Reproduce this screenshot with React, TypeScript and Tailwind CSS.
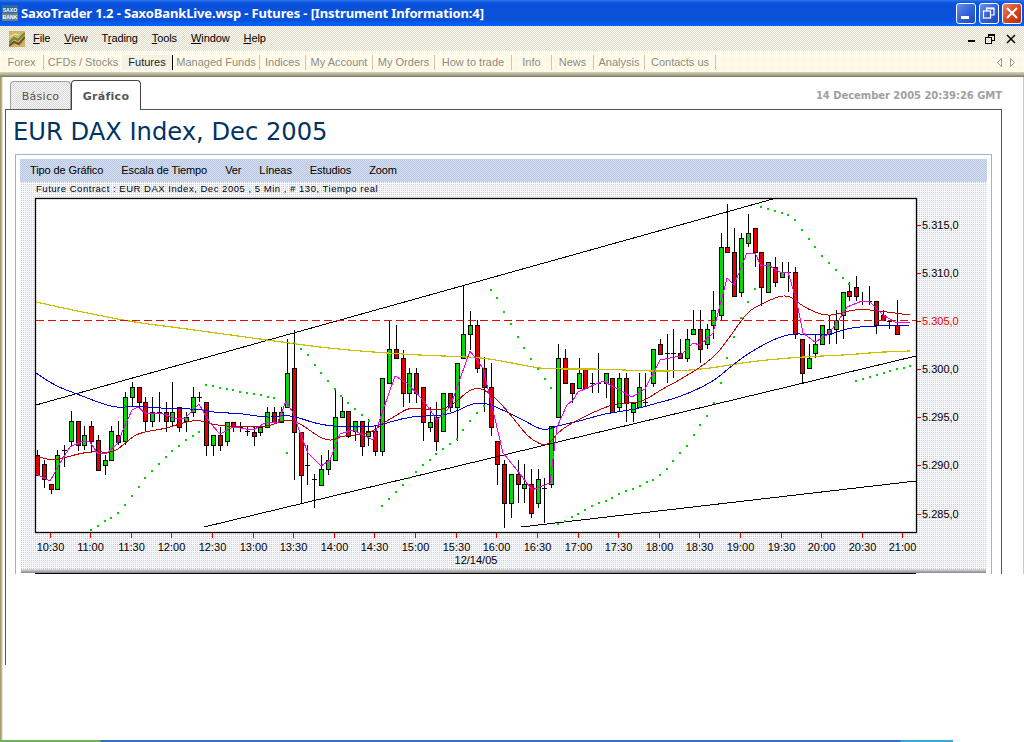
import React from "react";

const menuItems: [string, string, string][] = [
  ["", "F", "ile"],
  ["", "V", "iew"],
  ["T", "r", "ading"],
  ["", "T", "ools"],
  ["", "W", "indow"],
  ["", "H", "elp"],
];

const navItems = [
  { label: "Forex", cls: "w-[44px] border-r border-[#c9c6b8] text-[#8c8c86]" },
  { label: "CFDs / Stocks", cls: "w-[78px] text-[#8c8c86]" },
  { label: "Futures", cls: "w-[50px] bg-[#f4f1e6] text-[#222222]" },
  { label: "Managed Funds", cls: "w-[88px] border-l border-r border-l-black border-r-[#c9c6b8] text-[#8c8c86]" },
  { label: "Indices", cls: "w-[46px] border-r border-[#c9c6b8] text-[#8c8c86]" },
  { label: "My Account", cls: "w-[67px] border-r border-[#c9c6b8] text-[#8c8c86]" },
  { label: "My Orders", cls: "w-[62px] border-r border-[#c9c6b8] text-[#8c8c86]" },
  { label: "How to trade", cls: "w-[77px] border-r border-[#c9c6b8] text-[#8c8c86]" },
  { label: "Info", cls: "w-[40px] border-r border-[#c9c6b8] text-[#8c8c86]" },
  { label: "News", cls: "w-[42px] border-r border-[#c9c6b8] text-[#8c8c86]" },
  { label: "Analysis", cls: "w-[51px] border-r border-[#c9c6b8] text-[#8c8c86]" },
  { label: "Contacts us", cls: "w-[71px] border-r border-[#c9c6b8] text-[#8c8c86]" },
];

const chartMenu = ["Tipo de Gráfico", "Escala de Tiempo", "Ver", "Líneas", "Estudios", "Zoom"];

// x, wick top, body top, body bottom, wick bottom, g/r/d
type Candle = [number, number, number, number, number, string];
const candles: Candle[] = [
  [37, 450, 455, 475, 475, "r"], [44, 460, 464, 479, 488, "r"], [51, 484, 484, 489, 494, "r"], [57, 450, 455, 489, 489, "g"],
  [64, 445, 450, 450, 467, "d"], [71, 411, 421, 441, 447, "g"], [78, 421, 421, 445, 451, "r"], [84, 426, 435, 445, 450, "g"],
  [91, 421, 426, 441, 452, "r"], [98, 435, 440, 470, 470, "r"], [105, 455, 460, 465, 475, "g"], [111, 426, 431, 460, 460, "g"],
  [118, 421, 435, 442, 445, "r"], [125, 392, 397, 441, 445, "g"], [132, 382, 387, 397, 407, "g"], [139, 387, 387, 402, 408, "r"],
  [145, 397, 402, 421, 432, "r"], [152, 397, 412, 421, 427, "g"], [159, 392, 412, 412, 422, "d"], [166, 402, 412, 421, 432, "r"],
  [172, 382, 412, 421, 427, "g"], [179, 407, 407, 427, 432, "r"], [186, 412, 417, 421, 432, "g"], [193, 387, 397, 412, 417, "g"],
  [199, 392, 397, 397, 402, "d"], [206, 402, 402, 445, 456, "r"], [213, 435, 435, 445, 456, "g"], [220, 427, 435, 445, 451, "r"],
  [227, 422, 422, 441, 446, "g"], [233, 422, 422, 427, 432, "r"], [240, 422, 427, 427, 432, "d"], [247, 427, 431, 431, 436, "d"],
  [254, 427, 432, 436, 446, "r"], [260, 427, 427, 432, 436, "g"], [267, 407, 412, 427, 427, "g"], [274, 407, 412, 422, 422, "r"],
  [281, 407, 412, 422, 422, "g"], [287, 339, 373, 407, 407, "g"], [294, 330, 368, 432, 480, "r"], [301, 432, 432, 475, 504, "r"],
  [307, 445, 465, 465, 485, "d"], [314, 474, 479, 479, 508, "d"], [321, 455, 469, 485, 485, "g"], [328, 450, 460, 469, 475, "g"],
  [335, 388, 417, 460, 460, "g"], [342, 397, 411, 417, 417, "g"], [348, 411, 411, 436, 438, "r"], [355, 421, 421, 431, 441, "g"],
  [362, 421, 421, 446, 456, "r"], [368, 419, 431, 436, 446, "g"], [375, 426, 431, 451, 456, "r"], [382, 378, 378, 451, 456, "g"],
  [389, 320, 349, 383, 383, "g"], [396, 325, 349, 358, 358, "r"], [403, 350, 358, 393, 407, "r"], [409, 368, 373, 393, 403, "g"],
  [416, 368, 373, 393, 403, "r"], [423, 387, 387, 422, 441, "r"], [430, 407, 422, 427, 432, "g"], [436, 402, 417, 441, 451, "r"],
  [443, 393, 393, 431, 431, "g"], [450, 393, 393, 407, 412, "r"], [457, 363, 363, 407, 441, "g"], [463, 286, 334, 358, 358, "g"],
  [470, 311, 325, 334, 350, "g"], [477, 320, 325, 368, 373, "r"], [484, 357, 368, 387, 412, "r"], [491, 363, 387, 427, 436, "r"],
  [497, 441, 441, 464, 485, "r"], [504, 460, 464, 503, 528, "r"], [511, 474, 474, 503, 518, "g"], [518, 460, 474, 484, 503, "r"],
  [524, 464, 484, 488, 503, "g"], [531, 469, 484, 513, 518, "r"], [538, 469, 479, 503, 508, "g"], [544, 478, 488, 488, 523, "d"],
  [551, 426, 426, 484, 488, "g"], [558, 344, 358, 417, 417, "g"], [565, 349, 358, 383, 383, "r"], [572, 383, 383, 393, 403, "r"],
  [579, 358, 373, 388, 388, "g"], [585, 368, 368, 388, 388, "r"], [592, 373, 383, 383, 393, "d"], [598, 353, 383, 383, 393, "d"],
  [606, 373, 373, 383, 398, "g"], [612, 378, 378, 412, 412, "r"], [619, 373, 378, 407, 412, "g"], [626, 373, 378, 403, 422, "r"],
  [633, 403, 403, 412, 422, "g"], [639, 373, 387, 407, 407, "g"], [645, 373, 402, 402, 407, "d"], [653, 349, 349, 383, 387, "g"],
  [660, 339, 344, 354, 354, "r"], [667, 334, 353, 353, 383, "d"], [673, 329, 353, 353, 378, "d"], [680, 339, 353, 358, 358, "r"],
  [687, 329, 339, 358, 362, "g"], [693, 310, 329, 334, 334, "g"], [700, 310, 329, 349, 363, "r"], [707, 324, 329, 344, 349, "g"],
  [713, 291, 310, 325, 339, "g"], [721, 233, 247, 315, 320, "g"], [727, 204, 247, 252, 252, "r"], [734, 228, 252, 296, 296, "r"],
  [741, 233, 238, 292, 297, "g"], [748, 214, 233, 243, 247, "g"], [755, 228, 228, 252, 267, "r"], [761, 252, 252, 287, 306, "r"],
  [768, 262, 262, 292, 292, "g"], [775, 257, 267, 282, 287, "r"], [782, 262, 272, 277, 277, "g"], [788, 262, 272, 272, 292, "d"],
  [795, 267, 272, 334, 339, "r"], [802, 339, 339, 373, 383, "r"], [809, 344, 358, 368, 368, "g"], [815, 334, 344, 353, 358, "g"],
  [822, 325, 325, 344, 344, "g"], [829, 315, 329, 334, 344, "g"], [836, 310, 320, 329, 344, "g"], [843, 292, 292, 315, 339, "g"],
  [849, 282, 291, 296, 301, "r"], [856, 276, 287, 296, 301, "r"], [862, 292, 301, 301, 305, "d"], [869, 286, 301, 301, 305, "d"],
  [876, 301, 301, 325, 334, "r"], [883, 310, 315, 320, 320, "r"], [889, 321, 321, 321, 329, "d"], [897, 300, 325, 334, 334, "r"],
];

const yellowLine = "36,302 117,320 180,328 267,340 333,349 413,355 473,357 497,360 537,368 553,369 607,369 640,371 680,371 713,368 747,362 797,357 847,355 880,352 910,351";
const blueLine = "36,373 53,385 77,394 100,403 117,408 133,406 160,408 180,409 200,409 217,413 240,413 267,418 287,415 300,418 317,424 340,427 373,427 390,422 413,416 437,416 453,413 473,403 487,403 507,412 527,422 543,431 557,426 580,421 607,413 633,410 657,403 680,397 713,382 730,367 753,350 787,333 813,335 830,335 847,328 873,326 910,325";
const redLine = "36,456 50,461 67,457 90,451 113,453 123,445 137,433 163,429 173,426 197,419 213,425 240,427 267,427 287,419 300,423 320,438 333,441 340,436 370,434 383,423 397,415 410,407 437,411 453,405 470,389 483,388 500,402 517,423 530,439 547,447 557,433 573,422 607,406 623,403 643,402 660,390 680,380 713,359 730,337 747,312 763,303 787,293 803,307 827,317 847,311 863,309 887,312 910,315";
const magentaLine = "36,474 50,481 63,458 70,447 83,441 90,442 98,454 107,453 117,444 123,430 132,410 138,407 145,413 163,414 177,419 185,418 199,404 210,423 220,434 233,427 253,430 265,423 278,422 286,401 293,413 302,438 308,453 321,466 330,460 340,434 353,430 373,440 382,413 395,376 407,383 423,400 437,420 450,407 470,351 483,368 503,453 517,470 532,490 550,483 557,427 567,405 573,400 578,392 603,381 623,392 632,397 645,389 660,360 680,356 693,343 700,345 713,333 727,278 734,285 747,253 755,253 761,266 768,265 780,272 788,272 797,303 803,333 815,342 827,335 837,323 847,307 862,301 870,302 883,315 897,323 910,322";

// rounds the corners of a point list, the moving averages are not angular
function smoothPath(points: string) {
  const pts = points.split(" ").map((p) => p.split(",").map(Number));
  let d = `M${pts[0][0]} ${pts[0][1]}`;
  for (let i = 1; i < pts.length - 1; i++) {
    const mx = (pts[i][0] + pts[i + 1][0]) / 2;
    const my = (pts[i][1] + pts[i + 1][1]) / 2;
    d += ` Q${pts[i][0]} ${pts[i][1]} ${mx} ${my}`;
  }
  const last = pts[pts.length - 1];
  return `${d} L${last[0]} ${last[1]}`;
}

const sarDots: [number, number][] = [
  [90, 529], [97, 525], [104, 520], [110, 517], [117, 512], [124, 504], [131, 495], [138, 486], [144, 477], [151, 470], [158, 463], [165, 456], [171, 450], [178, 445], [185, 439], [192, 435], [198, 431],
  [205, 384], [212, 385], [219, 387], [226, 388], [232, 389], [239, 391], [246, 392], [253, 393], [260, 394], [267, 396], [273, 397], [286, 452],
  [293, 342], [300, 348], [307, 354], [314, 364], [320, 372], [327, 380], [334, 388], [340, 395], [347, 402], [354, 408], [361, 414], [368, 420],
  [381, 505], [388, 498], [395, 491], [402, 484], [408, 477], [415, 471], [422, 464], [429, 459], [435, 453], [442, 448], [449, 443], [456, 438], [462, 429], [469, 420], [476, 412], [483, 405],
  [490, 289], [496, 297], [503, 311], [510, 323], [517, 336], [523, 347], [530, 358], [537, 368], [544, 378], [550, 387],
  [557, 523], [564, 520], [571, 516], [577, 513], [584, 509], [591, 505], [598, 502], [605, 500], [611, 497], [618, 493], [625, 490], [632, 488], [639, 485], [646, 481], [652, 479], [659, 474], [666, 468], [672, 460], [679, 452], [686, 445], [693, 434], [699, 424], [706, 415], [713, 402], [720, 382], [726, 357], [733, 336], [740, 317], [747, 301], [754, 288],
  [760, 206], [767, 208], [774, 210], [781, 212], [787, 214], [794, 219], [801, 229], [808, 238], [814, 246], [821, 255], [828, 262], [835, 269], [842, 277], [848, 283],
  [855, 380], [862, 378], [869, 376], [876, 374], [883, 372], [889, 370], [896, 368], [903, 367], [909, 365],
];

const xTicks: [number, string][] = [
  [50, "10:30"], [90, "11:00"], [131, "11:30"], [171, "12:00"], [212, "12:30"], [253, "13:00"], [293, "13:30"], [334, "14:00"], [374, "14:30"], [415, "15:00"], [456, "15:30"],
  [496, "16:00"], [537, "16:30"], [578, "17:00"], [618, "17:30"], [659, "18:00"], [699, "18:30"], [740, "19:00"], [781, "19:30"], [821, "20:00"], [862, "20:30"], [902, "21:00"],
];

const yTicks: [number, string][] = [
  [225, "5.315,0"], [273, "5.310,0"], [321, "5.305,0"], [369, "5.300,0"], [417, "5.295,0"], [465, "5.290,0"], [514, "5.285,0"],
];

function Chart() {
  return (
    <svg width={967} height={387} viewBox="20 182 967 387" className="block font-['Liberation_Sans',sans-serif]">
      <text x={36} y={192} className="text-[9.5px] tracking-[0.52px]" fill="#000">
        Future Contract : EUR DAX Index, Dec 2005 , 5 Min , # 130, Tiempo real
      </text>
      <rect x={35.5} y={198.5} width={881} height={334} fill="#fff" stroke="#000" strokeWidth={1.3} />

      {candles.map(([x, wt, bt, bb, wb, c]) => (
        <g key={x} shapeRendering="crispEdges">
          <line x1={x + 0.5} x2={x + 0.5} y1={wt} y2={wb} stroke="#000" />
          {c === "d" ? (
            <line x1={x - 2} x2={x + 3} y1={bt + 0.5} y2={bt + 0.5} stroke="#000" />
          ) : (
            <rect x={x - 1.5} y={bt + 0.5} width={4} height={bb - bt} fill={c === "g" ? "#00dc00" : "#e40000"} stroke="#000" />
          )}
        </g>
      ))}

      <g fill="none" shapeRendering="crispEdges">
        <polyline points="36,405 773,199" stroke="#000" strokeWidth={1} />
        <polyline points="204,527 916,356" stroke="#000" strokeWidth={1} />
        <polyline points="521,527 916,481" stroke="#000" strokeWidth={1} />
        <path d={smoothPath(yellowLine)} stroke="#c8c000" strokeWidth={1.2} />
        <path d={smoothPath(blueLine)} stroke="#0000d0" strokeWidth={1} />
        <path d={smoothPath(redLine)} stroke="#c00000" strokeWidth={1} />
        <polyline points={magentaLine} stroke="#f000f0" strokeWidth={1} />
      </g>
      <line x1={36} x2={916} y1={320.5} y2={320.5} stroke="#f00000" strokeDasharray="8 4" shapeRendering="crispEdges" />

      {sarDots.map(([x, y]) => (
        <rect key={`${x}-${y}`} x={x} y={y} width={2} height={2} fill="#00d000" />
      ))}

      {xTicks.map(([x, t]) => (
        <g key={t}>
          <line x1={x + 0.5} x2={x + 0.5} y1={533} y2={538} stroke="#e00000" shapeRendering="crispEdges" />
          <text x={x + 0.5} y={551} textAnchor="middle" className="text-[11px]" fill="#000">{t}</text>
        </g>
      ))}
      <text x={476} y={564} textAnchor="middle" className="text-[11px]" fill="#000">12/14/05</text>

      {yTicks.map(([y, t]) => (
        <g key={t}>
          <line x1={917} x2={921} y1={y + 0.5} y2={y + 0.5} stroke="#e00000" shapeRendering="crispEdges" />
          <text x={922} y={y + 4} className="text-[11px]" fill={t === "5.305,0" ? "#f00000" : "#000"}>{t}</text>
        </g>
      ))}
    </svg>
  );
}

function SaxoLogo() {
  return (
    <svg width={16} height={16} viewBox="0 0 16 16" className="block font-['Liberation_Sans',sans-serif]">
      <rect width={16} height={8} fill="#2c6aa6" />
      <rect y={8} width={16} height={8} fill="#6d7b8a" />
      <text x={8} y={6.5} textAnchor="middle" fontSize={5.2} fontWeight={700} fill="#fff">SAXO</text>
      <text x={8} y={14} textAnchor="middle" fontSize={5.2} fontWeight={700} fill="#fff">BANK</text>
    </svg>
  );
}

function AppIcon() {
  return (
    <svg width={16} height={16} viewBox="0 0 16 16" className="block">
      <rect width={16} height={16} fill="#c8b46a" />
      <path d="M0 12 L5 7 L9 9 L16 2" stroke="#6b8a3a" strokeWidth={2} fill="none" />
      <path d="M0 15 L5 11 L10 13 L16 6" stroke="#7a4a1e" strokeWidth={2} fill="none" />
      <path d="M0 6 L6 3 L10 4" stroke="#e8dc9a" strokeWidth={1.5} fill="none" />
    </svg>
  );
}

function WinButton({ close, children }: { close?: boolean; children: React.ReactNode }) {
  return (
    <div
      className={`w-[20px] h-[21px] rounded-[3px] border border-white flex items-center justify-center ${
        close
          ? "bg-[linear-gradient(135deg,#e8866a,#d8431c_55%,#b82c08)]"
          : "bg-[linear-gradient(135deg,#6a8fe8,#2f5fd8_55%,#1f48c0)]"
      }`}
    >
      {children}
    </div>
  );
}

export default function App() {
  return (
    <div className="w-[1024px] h-[742px] flex flex-col overflow-hidden bg-white font-['Liberation_Sans',sans-serif]">
      {/* title bar */}
      <div className="h-[26px] shrink-0 flex items-center pl-[2px] pr-[2px] bg-[linear-gradient(to_bottom,#2a78ee_0,#0a52dc_3px,#0a50d8_20px,#0060f4_24px,#0060f4_100%)]">
        <SaxoLogo />
        <span className="ml-[3px] text-white text-[13px] font-bold leading-none tracking-[-0.13px] font-['Noto_Sans',sans-serif]">
          SaxoTrader 1.2 - SaxoBankLive.wsp - Futures - [Instrument Information:4]
        </span>
        <div className="ml-auto flex gap-[3px]">
          <WinButton>
            <div className="w-[8px] h-[3px] bg-white mt-[8px] mr-[3px]" />
          </WinButton>
          <WinButton>
            <svg width={14} height={14} viewBox="0 0 14 14" fill="none" stroke="#fff" strokeWidth={1.2}>
              <rect x={1.5} y={5} width={7} height={7} />
              <path d="M4.5 5 V2 H12 V9 H8.5" />
              <path d="M4.5 2.6 H12" strokeWidth={1.6} />
            </svg>
          </WinButton>
          <WinButton close>
            <svg width={14} height={14} viewBox="0 0 14 14" stroke="#fff" strokeWidth={2}>
              <path d="M2 2 L12 12 M12 2 L2 12" />
            </svg>
          </WinButton>
        </div>
      </div>

      {/* menu bar */}
      <div className="h-[25px] shrink-0 flex items-center pl-[9px] pr-[8px] bg-[repeating-conic-gradient(#dedac8_0_25%,#fbfaf5_0_50%)] bg-[length:2px_2px]">
        <AppIcon />
        <div className="ml-[8px] flex gap-[14px] text-[11px] tracking-[-0.1px] text-black">
          {menuItems.map(([pre, key, rest]) => (
            <span key={pre + key + rest}>
              {pre}
              <span className="underline">{key}</span>
              {rest}
            </span>
          ))}
        </div>
        <div className="ml-auto flex items-center gap-[9px]">
          <svg width={8} height={10} viewBox="0 0 8 10">
            <rect x={0} y={6} width={7} height={2} fill="#000" />
          </svg>
          <svg width={10} height={10} viewBox="0 0 10 10" fill="none" stroke="#000" shapeRendering="crispEdges">
            <rect x={0.5} y={3.5} width={6} height={6} />
            <path d="M3.5 3 V0.5 H9.5 V6.5 H7" />
            <path d="M3.5 1.5 H9.5" />
          </svg>
          <svg width={10} height={10} viewBox="0 0 10 10" stroke="#000" strokeWidth={1.5} className="ml-[2px]">
            <path d="M1 1 L9 9 M9 1 L1 9" />
          </svg>
        </div>
      </div>

      {/* nav strip */}
      <div className="h-[21px] shrink-0 flex items-center pt-px bg-[repeating-conic-gradient(#fff6dc_0_25%,#fffff6_0_50%)] bg-[length:2px_2px]">
        {navItems.map((item) => (
          <div key={item.label} className={`h-[15px] flex items-center justify-center text-[11px] ${item.cls}`}>
            {item.label}
          </div>
        ))}
        <div className="ml-auto flex gap-[8px] mr-[9px]">
          <svg width={5} height={9} viewBox="0 0 5 9" fill="#fff" stroke="#999999" shapeRendering="crispEdges">
            <path d="M4.5 0.5 V8.5 L0.5 4.5 Z" />
          </svg>
          <svg width={5} height={9} viewBox="0 0 5 9" fill="#fff" stroke="#999999" shapeRendering="crispEdges">
            <path d="M0.5 0.5 V8.5 L4.5 4.5 Z" />
          </svg>
        </div>
      </div>
      <div className="h-[5px] shrink-0 bg-[linear-gradient(to_bottom,#d6d2bc_0,#a8a68a_60%,#77775a_100%)]" />

      <div className="flex-1 flex min-h-0">
        <div className="w-[5px] shrink-0 bg-[linear-gradient(to_right,#8f8f60_0,#c8c8a0_2px,#ffffff_3px)]" />
        <div className="w-[997px] shrink-0 flex flex-col">
          {/* tabs */}
          <div className="h-[32px] shrink-0 flex items-end pl-[5px] relative z-10">
            <div className="w-[61px] h-[28px] pt-[3px] flex items-center justify-center rounded-t-[4px] border border-b-0 border-[#a0a0a0] text-[11px] text-[#555555] tracking-[0.3px] font-['DejaVu_Sans',sans-serif] bg-[repeating-conic-gradient(#d8d8d8_0_25%,#f8f8f8_0_50%)] bg-[length:2px_2px]">
              Básico
            </div>
            <div className="w-[70px] h-[30px] pt-[3px] -mb-px flex items-center justify-center rounded-t-[4px] border border-b-0 border-[#444444] bg-white text-[11px] font-bold text-[#555555] tracking-[0.3px] font-['DejaVu_Sans',sans-serif]">
              Gráfico
            </div>
            <div className="ml-auto self-center mt-[5px] text-[10px] font-bold text-[#a0a0a0] tracking-[-0.05px] font-['DejaVu_Sans',sans-serif]">
              14 December 2005 20:39:26 GMT
            </div>
          </div>

          {/* panel */}
          <div className="h-[556px] border-l border-[#555555]">
            <div className="w-[996px] h-[465px] border-t border-r border-[#555555]">
              <h1 className="h-[44px] pl-[7px] pt-px flex items-center text-[24.2px] leading-none font-normal text-[#003366] font-['DejaVu_Sans',sans-serif]">
                EUR DAX Index, Dec 2005
              </h1>
              <div className="ml-[9px] w-[977px] border border-b-0 border-[#9db2ce] px-[4px] pt-[4px]">
                <div className="h-[23px] flex items-center pl-[10px] gap-[18px] text-[11px] tracking-[-0.1px] text-black bg-[repeating-conic-gradient(#b9c7e2_0_25%,#d4deef_0_50%)] bg-[length:2px_2px]">
                  {chartMenu.map((label) => (
                    <span key={label}>{label}</span>
                  ))}
                </div>
                <div className="bg-[conic-gradient(#c4cfe4_25%,#f6f8fc_0)] bg-[length:2px_2px]">
                  <Chart />
                  <div className="h-[4px] mx-px bg-[linear-gradient(to_bottom,#e0e0e0,#888888)]" />
                </div>
                <div className="h-px w-[881px] ml-[15px] bg-black" />
              </div>
            </div>
          </div>
        </div>
        <div className="ml-auto w-px h-[497px] bg-[#c8c8c8]" />
      </div>

      {/* bottom edge */}
      <div className="h-[2px] shrink-0 w-[953px] bg-[linear-gradient(to_right,#6fae5c_0,#6fae5c_100px,#3a6fc8_101px,#3a6fc8_900px,#38a8d8_901px)]" />
    </div>
  );
}
